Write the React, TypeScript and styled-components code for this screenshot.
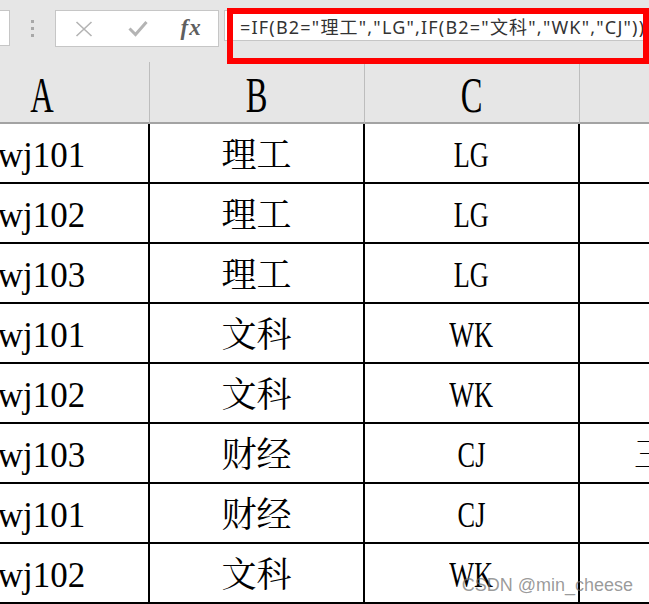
import styled, { createGlobalStyle } from "styled-components";

const GlobalStyle = createGlobalStyle`
  html, body {
    margin: 0;
    padding: 0;
    background: #ffffff;
  }
  #root {
    width: 649px;
    height: 604px;
    overflow: hidden;
  }
`;

const columns = ["A", "B", "C", "D"];

const rows = [
  ["wj101", "理工", "LG", ""],
  ["wj102", "理工", "LG", ""],
  ["wj103", "理工", "LG", ""],
  ["wj101", "文科", "WK", ""],
  ["wj102", "文科", "WK", ""],
  ["wj103", "财经", "CJ", "三本科"],
  ["wj101", "财经", "CJ", ""],
  ["wj102", "文科", "WK", ""],
];

const formula = '=IF(B2="理工","LG",IF(B2="文科","WK","CJ"))';

export default function App() {
  return (
    <Page>
      <GlobalStyle />
      <FormulaBar>
        <NameBox />
        <Grip>
          <Dot />
          <Dot />
          <Dot />
        </Grip>
        <ButtonGroup>
          <ToolButton>
            <svg width="18" height="16" viewBox="0 0 18 16">
              <path d="M1.5 1 L16.5 15 M16.5 1 L1.5 15" stroke="#b4b4b4" strokeWidth="1.6" fill="none" />
            </svg>
          </ToolButton>
          <ToolButton>
            <svg width="20" height="17" viewBox="0 0 20 17">
              <path d="M1.5 8.5 L7.5 14.5 L18.5 2" stroke="#b4b4b4" strokeWidth="3" fill="none" />
            </svg>
          </ToolButton>
          <ToolButton>
            <FxLabel>fx</FxLabel>
          </ToolButton>
        </ButtonGroup>
        <FormulaInput>{formula}</FormulaInput>
        <Highlight />
      </FormulaBar>

      <SheetViewport>
        <Sheet>
          {columns.map((c) => (
            <HeaderCell key={c}>
              <HeaderLetter>{c}</HeaderLetter>
            </HeaderCell>
          ))}
          {rows.map((r, i) =>
            r.map((v, j) => (
              <Cell key={i + "-" + j}>
                <CellText $narrow={j === 2}>{v}</CellText>
              </Cell>
            ))
          )}
        </Sheet>
      </SheetViewport>

      <Watermark>CSDN @min_cheese</Watermark>
    </Page>
  );
}

const Page = styled.div`
  position: relative;
  width: 649px;
  height: 604px;
  overflow: hidden;
  background: #ffffff;
`;

const FormulaBar = styled.div`
  position: relative;
  z-index: 2;
  height: 62px;
  box-sizing: border-box;
  padding-top: 10px;
  background: #e6e6e6;
  display: flex;
  align-items: flex-start;
`;

const NameBox = styled.div`
  width: 10px;
  height: 36px;
  box-sizing: border-box;
  background: #ffffff;
  border: 1px solid #c6c6c6;
  border-left: none;
`;

const Grip = styled.div`
  width: 45px;
  height: 36px;
  display: flex;
  flex-direction: column;
  align-items: center;
  justify-content: center;
  gap: 4px;
`;

const Dot = styled.span`
  width: 3px;
  height: 3px;
  background: #a8a8a8;
`;

const ButtonGroup = styled.div`
  width: 164px;
  height: 37px;
  box-sizing: border-box;
  background: #ffffff;
  border: 1px solid #c6c6c6;
  display: flex;
  align-items: center;
  padding: 0 0 0 1px;
`;

const ToolButton = styled.div`
  width: 54px;
  height: 100%;
  display: flex;
  align-items: center;
  justify-content: center;
`;

const FxLabel = styled.span`
  font-family: "Liberation Serif", serif;
  font-style: italic;
  font-weight: 700;
  font-size: 23px;
  color: #5f5f5f;
  letter-spacing: 1px;
  margin-top: -2px;
`;

const FormulaInput = styled.div`
  flex: 1;
  margin-left: 5px;
  margin-right: -20px;
  height: 31px;
  box-sizing: border-box;
  background: #ffffff;
  border: 1px solid #c6c6c6;
  padding: 2px 0 0 15px;
  font-family: "Noto Sans", "Noto Sans CJK SC", sans-serif;
  font-size: 18px;
  letter-spacing: 1.2px;
  line-height: 29px;
  color: #333333;
  white-space: nowrap;
  overflow: hidden;
`;

const Highlight = styled.div`
  position: absolute;
  left: 227px;
  top: 8px;
  width: 422px;
  height: 56px;
  box-sizing: border-box;
  border: 6px solid #ff0000;
  pointer-events: none;
`;

const SheetViewport = styled.div`
  overflow: hidden;
`;

const Sheet = styled.div`
  display: grid;
  grid-template-columns: repeat(4, 215px);
  grid-auto-rows: 60px;
  grid-template-rows: 62px;
  margin-left: -65px;
  width: 860px;
`;

const HeaderCell = styled.div`
  background: #e6e6e6;
  border-right: 1px solid #bdbdbd;
  border-bottom: 2px solid #a3a3a3;
  display: flex;
  align-items: center;
  justify-content: center;
  padding-top: 6px;
  box-sizing: border-box;
`;

const HeaderLetter = styled.span`
  display: inline-block;
  font-family: "Liberation Serif", serif;
  font-size: 50px;
  line-height: 1;
  color: #000000;
  transform: scaleX(0.65);
`;

const Cell = styled.div`
  border-right: 2px solid #000000;
  border-bottom: 2px solid #000000;
  box-sizing: border-box;
  display: flex;
  align-items: center;
  justify-content: center;
  padding-top: 4px;
  white-space: nowrap;
`;

const CellText = styled.span<{ $narrow?: boolean }>`
  display: inline-block;
  font-family: "Liberation Serif", "Noto Serif CJK SC", "Noto Sans CJK SC", serif;
  font-size: 35px;
  font-weight: 400;
  line-height: 1;
  color: #000000;
  transform: ${(p) => (p.$narrow ? "scaleX(0.75)" : "none")};
`;

const Watermark = styled.div`
  position: absolute;
  right: 16px;
  bottom: 8px;
  font-family: "Liberation Sans", Arial, sans-serif;
  font-size: 18px;
  color: rgba(110, 110, 110, 0.7);
  pointer-events: none;
  z-index: 3;
`;
